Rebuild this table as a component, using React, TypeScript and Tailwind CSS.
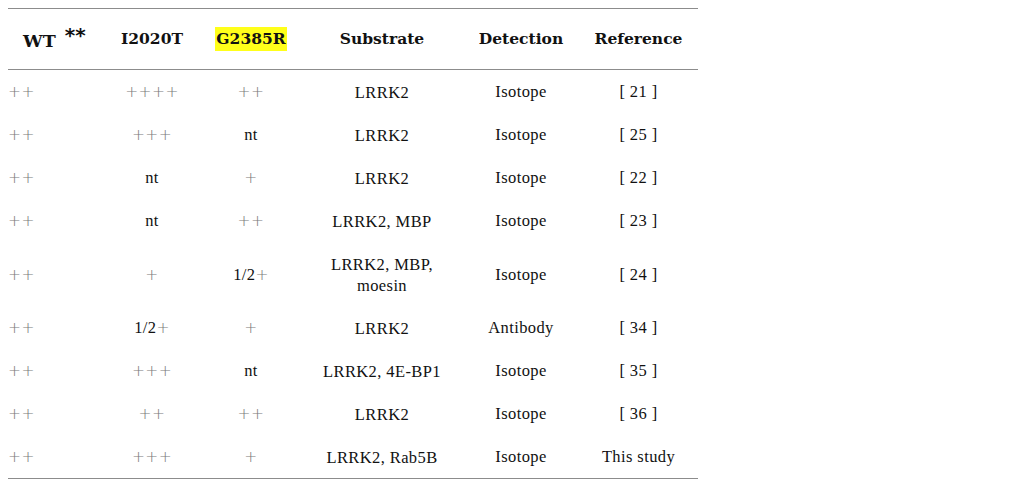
import React from "react";

interface Row {
  wt: string;
  i2020t: string;
  g2385r: string;
  substrate: string[];
  detection: string;
  reference: string;
  tall?: boolean;
}

const ROWS: Row[] = [
  { wt: "++", i2020t: "++++", g2385r: "++", substrate: ["LRRK2"], detection: "Isotope", reference: "[ 21 ]" },
  { wt: "++", i2020t: "+++", g2385r: "nt", substrate: ["LRRK2"], detection: "Isotope", reference: "[ 25 ]" },
  { wt: "++", i2020t: "nt", g2385r: "+", substrate: ["LRRK2"], detection: "Isotope", reference: "[ 22 ]" },
  { wt: "++", i2020t: "nt", g2385r: "++", substrate: ["LRRK2, MBP"], detection: "Isotope", reference: "[ 23 ]" },
  { wt: "++", i2020t: "+", g2385r: "1/2+", substrate: ["LRRK2, MBP,", "moesin"], detection: "Isotope", reference: "[ 24 ]", tall: true },
  { wt: "++", i2020t: "1/2+", g2385r: "+", substrate: ["LRRK2"], detection: "Antibody", reference: "[ 34 ]" },
  { wt: "++", i2020t: "+++", g2385r: "nt", substrate: ["LRRK2, 4E-BP1"], detection: "Isotope", reference: "[ 35 ]" },
  { wt: "++", i2020t: "++", g2385r: "++", substrate: ["LRRK2"], detection: "Isotope", reference: "[ 36 ]" },
  { wt: "++", i2020t: "+++", g2385r: "+", substrate: ["LRRK2, Rab5B"], detection: "Isotope", reference: "This study" },
];

const cols = "grid grid-cols-[95px_98px_100px_162px_116px_119px]";

// plus signs are thin, wide and grey like the latex math plus
function Score({ v }: { v: string }) {
  const parts = v.match(/\+|[^+]+/g) ?? [];
  return (
    <span>
      {parts.map((p, i) =>
        p === "+" ? (
          <span
            key={i}
            className="text-[#7a7a7a] text-[15.5px] font-extralight"
            style={{ fontFamily: '"DejaVu Sans", sans-serif' }}
          >
            +
          </span>
        ) : (
          <span key={i}>{p}</span>
        )
      )}
    </span>
  );
}

export default function App() {
  return (
    <div className="w-[1024px] h-[487px] bg-white pt-2 pl-2" style={{ fontFamily: '"Liberation Serif", "DejaVu Serif", serif' }}>
      <div className="w-[690px] text-[#111] text-[16.5px] tracking-[0.4px]">
        <div className="border-t border-[#8c8c8c]" />
        {/* header */}
        <div
          className={`${cols} h-[60px] items-center font-bold text-[15.5px] tracking-normal`}
          style={{ fontFamily: '"DejaVu Serif", serif' }}
        >
          <div className="pl-[15px] flex items-start">
            <span className="translate-y-[2px] text-[17.5px] leading-[20px]">WT</span>
            <span
              className="ml-[9px] -translate-y-[4px] text-[20px] leading-[20px]"
              style={{ fontFamily: '"DejaVu Sans", sans-serif' }}
            >
              **
            </span>
          </div>
          <div className="text-center">I2020T</div>
          <div className="flex justify-center">
            <span className="bg-[#ffff1a] px-[1px] py-[3px] leading-[18px]">G2385R</span>
          </div>
          <div className="text-center">Substrate</div>
          <div className="text-center">Detection</div>
          <div className="text-center">Reference</div>
        </div>
        <div className="border-t border-[#8c8c8c]" />
        {/* body */}
        <div className="flex flex-col pt-[1px]">
          {ROWS.map((r, i) => (
            <div key={i} className={`${cols} items-center ${r.tall ? "h-[64px]" : "h-[43px]"}`}>
              <div className="text-left"><Score v={r.wt} /></div>
              <div className="text-center"><Score v={r.i2020t} /></div>
              <div className="text-center"><Score v={r.g2385r} /></div>
              <div className="text-center leading-[21px]">
                {r.substrate.map((s) => (
                  <div key={s}>{s}</div>
                ))}
              </div>
              <div className="text-center">{r.detection}</div>
              <div className="text-center">{r.reference}</div>
            </div>
          ))}
        </div>
        <div className="border-t border-[#8c8c8c] -mt-[1px]" />
      </div>
    </div>
  );
}
